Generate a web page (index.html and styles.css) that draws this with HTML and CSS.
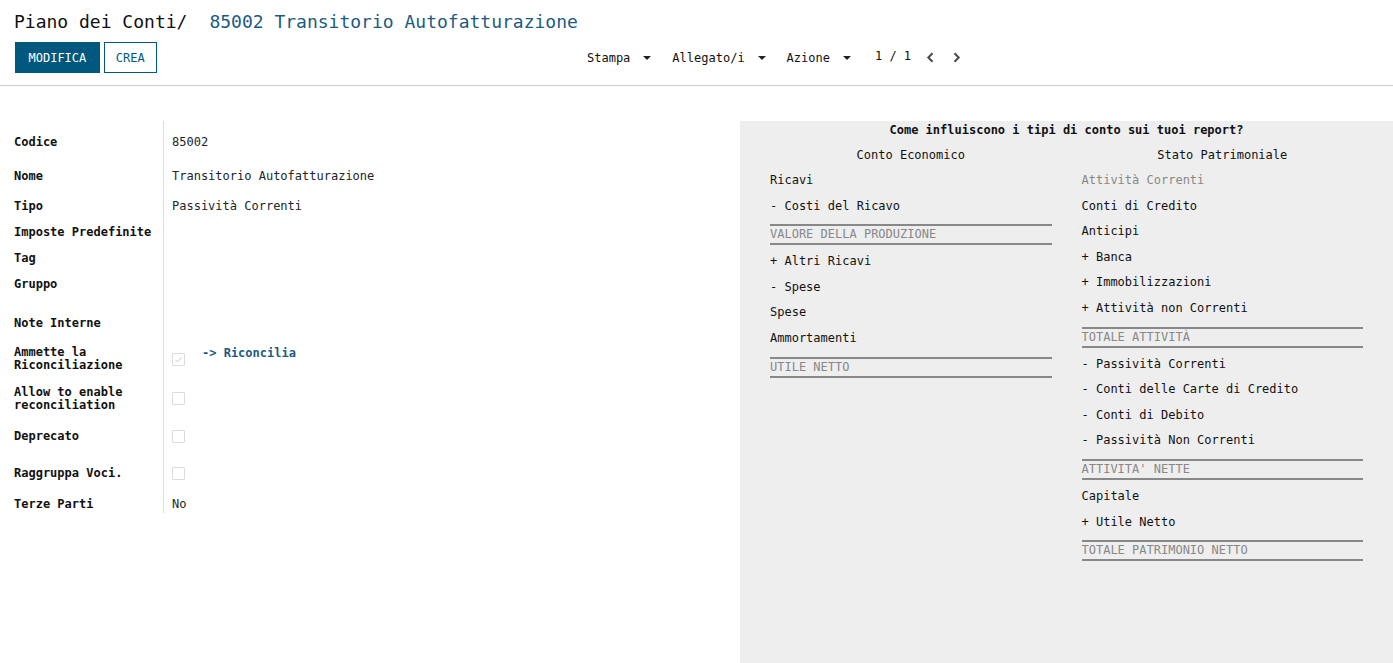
FILE: index.html
```html
<!DOCTYPE html>
<html lang="it">
<head>
<meta charset="utf-8">
<title>Piano dei Conti</title>
<link rel="stylesheet" href="styles.css">
</head>
<body>
<div class="cp">
  <div class="crumbs"><span class="crumb">Piano dei Conti</span><span class="sep">/</span><span class="current">85002 Transitorio Autofatturazione</span></div>
  <div class="cp-row">
    <div class="cp-buttons">
      <button class="btn btn-primary">MODIFICA</button>
      <button class="btn btn-secondary">CREA</button>
    </div>
    <div class="cp-sidebar">
      <span class="dd">Stampa<i class="caret"></i></span>
      <span class="dd">Allegato/i<i class="caret"></i></span>
      <span class="dd">Azione<i class="caret"></i></span>
    </div>
    <div class="pager">
      <span class="pager-value">1 / 1</span>
      <span class="pager-btn prev"><svg width="8" height="11" viewBox="0 0 8 11"><path d="M6.5 1.2 L2.3 5.5 L6.5 9.8" fill="none" stroke="#4b4b4b" stroke-width="2"/></svg></span>
      <span class="pager-btn next"><svg width="8" height="11" viewBox="0 0 8 11"><path d="M1.5 1.2 L5.7 5.5 L1.5 9.8" fill="none" stroke="#4b4b4b" stroke-width="2"/></svg></span>
    </div>
  </div>
</div>

<div class="content">
  <div class="form">
    <div class="fields">
      <div class="lbl first">Codice</div><div class="val first">85002</div>
      <div class="lbl">Nome</div><div class="val">Transitorio Autofatturazione</div>
      <div class="lbl">Tipo</div><div class="val">Passività Correnti</div>
      <div class="lbl">Imposte Predefinite</div><div class="val"></div>
      <div class="lbl">Tag</div><div class="val"></div>
      <div class="lbl">Gruppo</div><div class="val"></div>
      <div class="lbl">Note Interne</div><div class="val"></div>
      <div class="lbl two">Ammette la<br>Riconciliazione</div>
      <div class="val inline"><span class="cb cb-low checked"><svg width="11" height="11" viewBox="0 0 11 11"><path d="M2.5 5.8 L4.6 7.9 L8.6 3.3" fill="none" stroke="#c8c8c8" stroke-width="1"/></svg></span><span class="link">-&gt; Riconcilia</span></div>
      <div class="lbl two">Allow to enable<br>reconciliation</div><div class="val"><span class="cb cb-low2"></span></div>
      <div class="lbl">Deprecato</div><div class="val"><span class="cb"></span></div>
      <div class="lbl">Raggruppa Voci.</div><div class="val"><span class="cb"></span></div>
      <div class="lbl">Terze Parti</div><div class="val">No</div>
    </div>
  </div>

  <div class="help">
    <div class="help-title">Come influiscono i tipi di conto sui tuoi report?</div>
    <div class="help-cols">
      <div class="help-col">
        <div class="col-head">Conto Economico</div>
        <div class="item">Ricavi</div>
        <div class="item">- Costi del Ricavo</div>
        <div class="total">VALORE DELLA PRODUZIONE</div>
        <div class="item">+ Altri Ricavi</div>
        <div class="item">- Spese</div>
        <div class="item">Spese</div>
        <div class="item">Ammortamenti</div>
        <div class="total">UTILE NETTO</div>
      </div>
      <div class="help-col">
        <div class="col-head">Stato Patrimoniale</div>
        <div class="item muted">Attività Correnti</div>
        <div class="item">Conti di Credito</div>
        <div class="item">Anticipi</div>
        <div class="item">+ Banca</div>
        <div class="item">+ Immobilizzazioni</div>
        <div class="item">+ Attività non Correnti</div>
        <div class="total">TOTALE ATTIVITÀ</div>
        <div class="item">- Passività Correnti</div>
        <div class="item">- Conti delle Carte di Credito</div>
        <div class="item">- Conti di Debito</div>
        <div class="item">- Passività Non Correnti</div>
        <div class="total">ATTIVITA' NETTE</div>
        <div class="item">Capitale</div>
        <div class="item">+ Utile Netto</div>
        <div class="total">TOTALE PATRIMONIO NETTO</div>
      </div>
    </div>
  </div>
</div>
</body>
</html>
```

FILE: styles.css
```css
* { box-sizing: border-box; }

html, body {
  margin: 0;
  padding: 0;
  background: #ffffff;
}

body {
  font-family: "DejaVu Sans Mono", "Liberation Mono", monospace;
  font-size: 12px;
  color: #212529;
  overflow: hidden;
}

/* ---------- control panel ---------- */
.cp {
  padding: 10px 0 12px 14px;
  border-bottom: 1px solid #cccccc;
  height: 86px;
}

.crumbs {
  font-size: 18px;
  line-height: 24px;
  height: 24px;
  white-space: nowrap;
  color: #111111;
}

.crumbs .sep {
  margin-right: 22px;
}

.crumbs .current {
  color: #1d5b80;
}

.cp-row {
  display: flex;
  align-items: center;
  margin-top: 8px;
  height: 31px;
}

.cp-buttons {
  width: 573px;
  flex: none;
  display: flex;
  gap: 4px;
  padding-left: 1px;
}

.btn {
  font-family: inherit;
  font-size: 12px;
  line-height: 14px;
  height: 31px;
  border-radius: 0;
  cursor: pointer;
  margin: 0;
}

.btn-primary {
  background: #01587e;
  color: #ffffff;
  border: 1px solid #01587e;
  padding: 0 12.5px;
}

.btn-secondary {
  background: #ffffff;
  color: #01587e;
  border: 1px solid #01587e;
  padding: 0 11px;
}

.cp-sidebar {
  display: flex;
  align-items: center;
  gap: 21px;
  color: #111111;
}

.dd {
  display: flex;
  align-items: center;
  line-height: 14px;
  white-space: nowrap;
}

.caret {
  display: inline-block;
  width: 0;
  height: 0;
  margin-left: 13px;
  border-top: 4px solid #222222;
  border-left: 4px solid transparent;
  border-right: 4px solid transparent;
}

.pager {
  display: flex;
  align-items: center;
  margin-left: 24px;
  margin-bottom: 3px;
  color: #111111;
}

.pager-value {
  line-height: 14px;
  white-space: nowrap;
}

.pager-btn {
  display: flex;
  align-items: center;
  height: 14px;
  margin-top: 3px;
}

.pager-btn.prev { margin-left: 15px; }
.pager-btn.next { margin-left: 19px; }

/* ---------- content ---------- */
.content {
  display: flex;
  align-items: flex-start;
}

.form {
  width: 740px;
  flex: none;
  padding: 35px 0 0 14px;
}

.fields {
  display: grid;
  grid-template-columns: 150px 1fr;
  grid-template-rows: 48px 30px 26px 26px 26px 39px 30px 40px 43px 37px 31px 16px;
}

.lbl {
  font-weight: bold;
  line-height: 14px;
  border-right: 1px solid #dddddd;
  color: #111111;
  white-space: nowrap;
}

.lbl.two {
  line-height: 13px;
}

.val {
  padding-left: 8px;
  line-height: 14px;
  white-space: nowrap;
}

.first {
  padding-top: 14px;
}

.val.inline {
  display: flex;
  align-items: flex-start;
}

.cb {
  display: block;
  width: 13px;
  height: 13px;
  border: 1px solid #dcdcdc;
  border-radius: 1px;
  background: #ffffff;
  margin-top: 1px;
}

.cb svg {
  display: block;
}

.cb-low { margin-top: 7px; }
.cb-low2 { margin-top: 6px; }

.link {
  margin-left: 17px;
  font-weight: bold;
  color: #1d5b80;
}

/* ---------- help panel ---------- */
.help {
  flex: 1;
  margin-top: 35px;
  min-height: 542px;
  background: #eeeeee;
  padding: 2px 30px 0;
}

.help-title {
  text-align: center;
  font-weight: bold;
  line-height: 14px;
  margin-bottom: 5.5px;
  color: #111111;
}

.help-cols {
  display: grid;
  grid-template-columns: 1fr 1fr;
  column-gap: 30px;
}

.col-head {
  text-align: center;
  height: 25.6px;
  line-height: 25.6px;
  color: #111111;
}

.item {
  height: 25.6px;
  line-height: 25.6px;
  white-space: nowrap;
  color: #111111;
}

.item.muted {
  color: #888888;
}

.total {
  margin: 5px 0 4px;
  border-top: 2px solid #888888;
  border-bottom: 2px solid #888888;
  line-height: 17px;
  color: #888888;
  white-space: nowrap;
}
```
